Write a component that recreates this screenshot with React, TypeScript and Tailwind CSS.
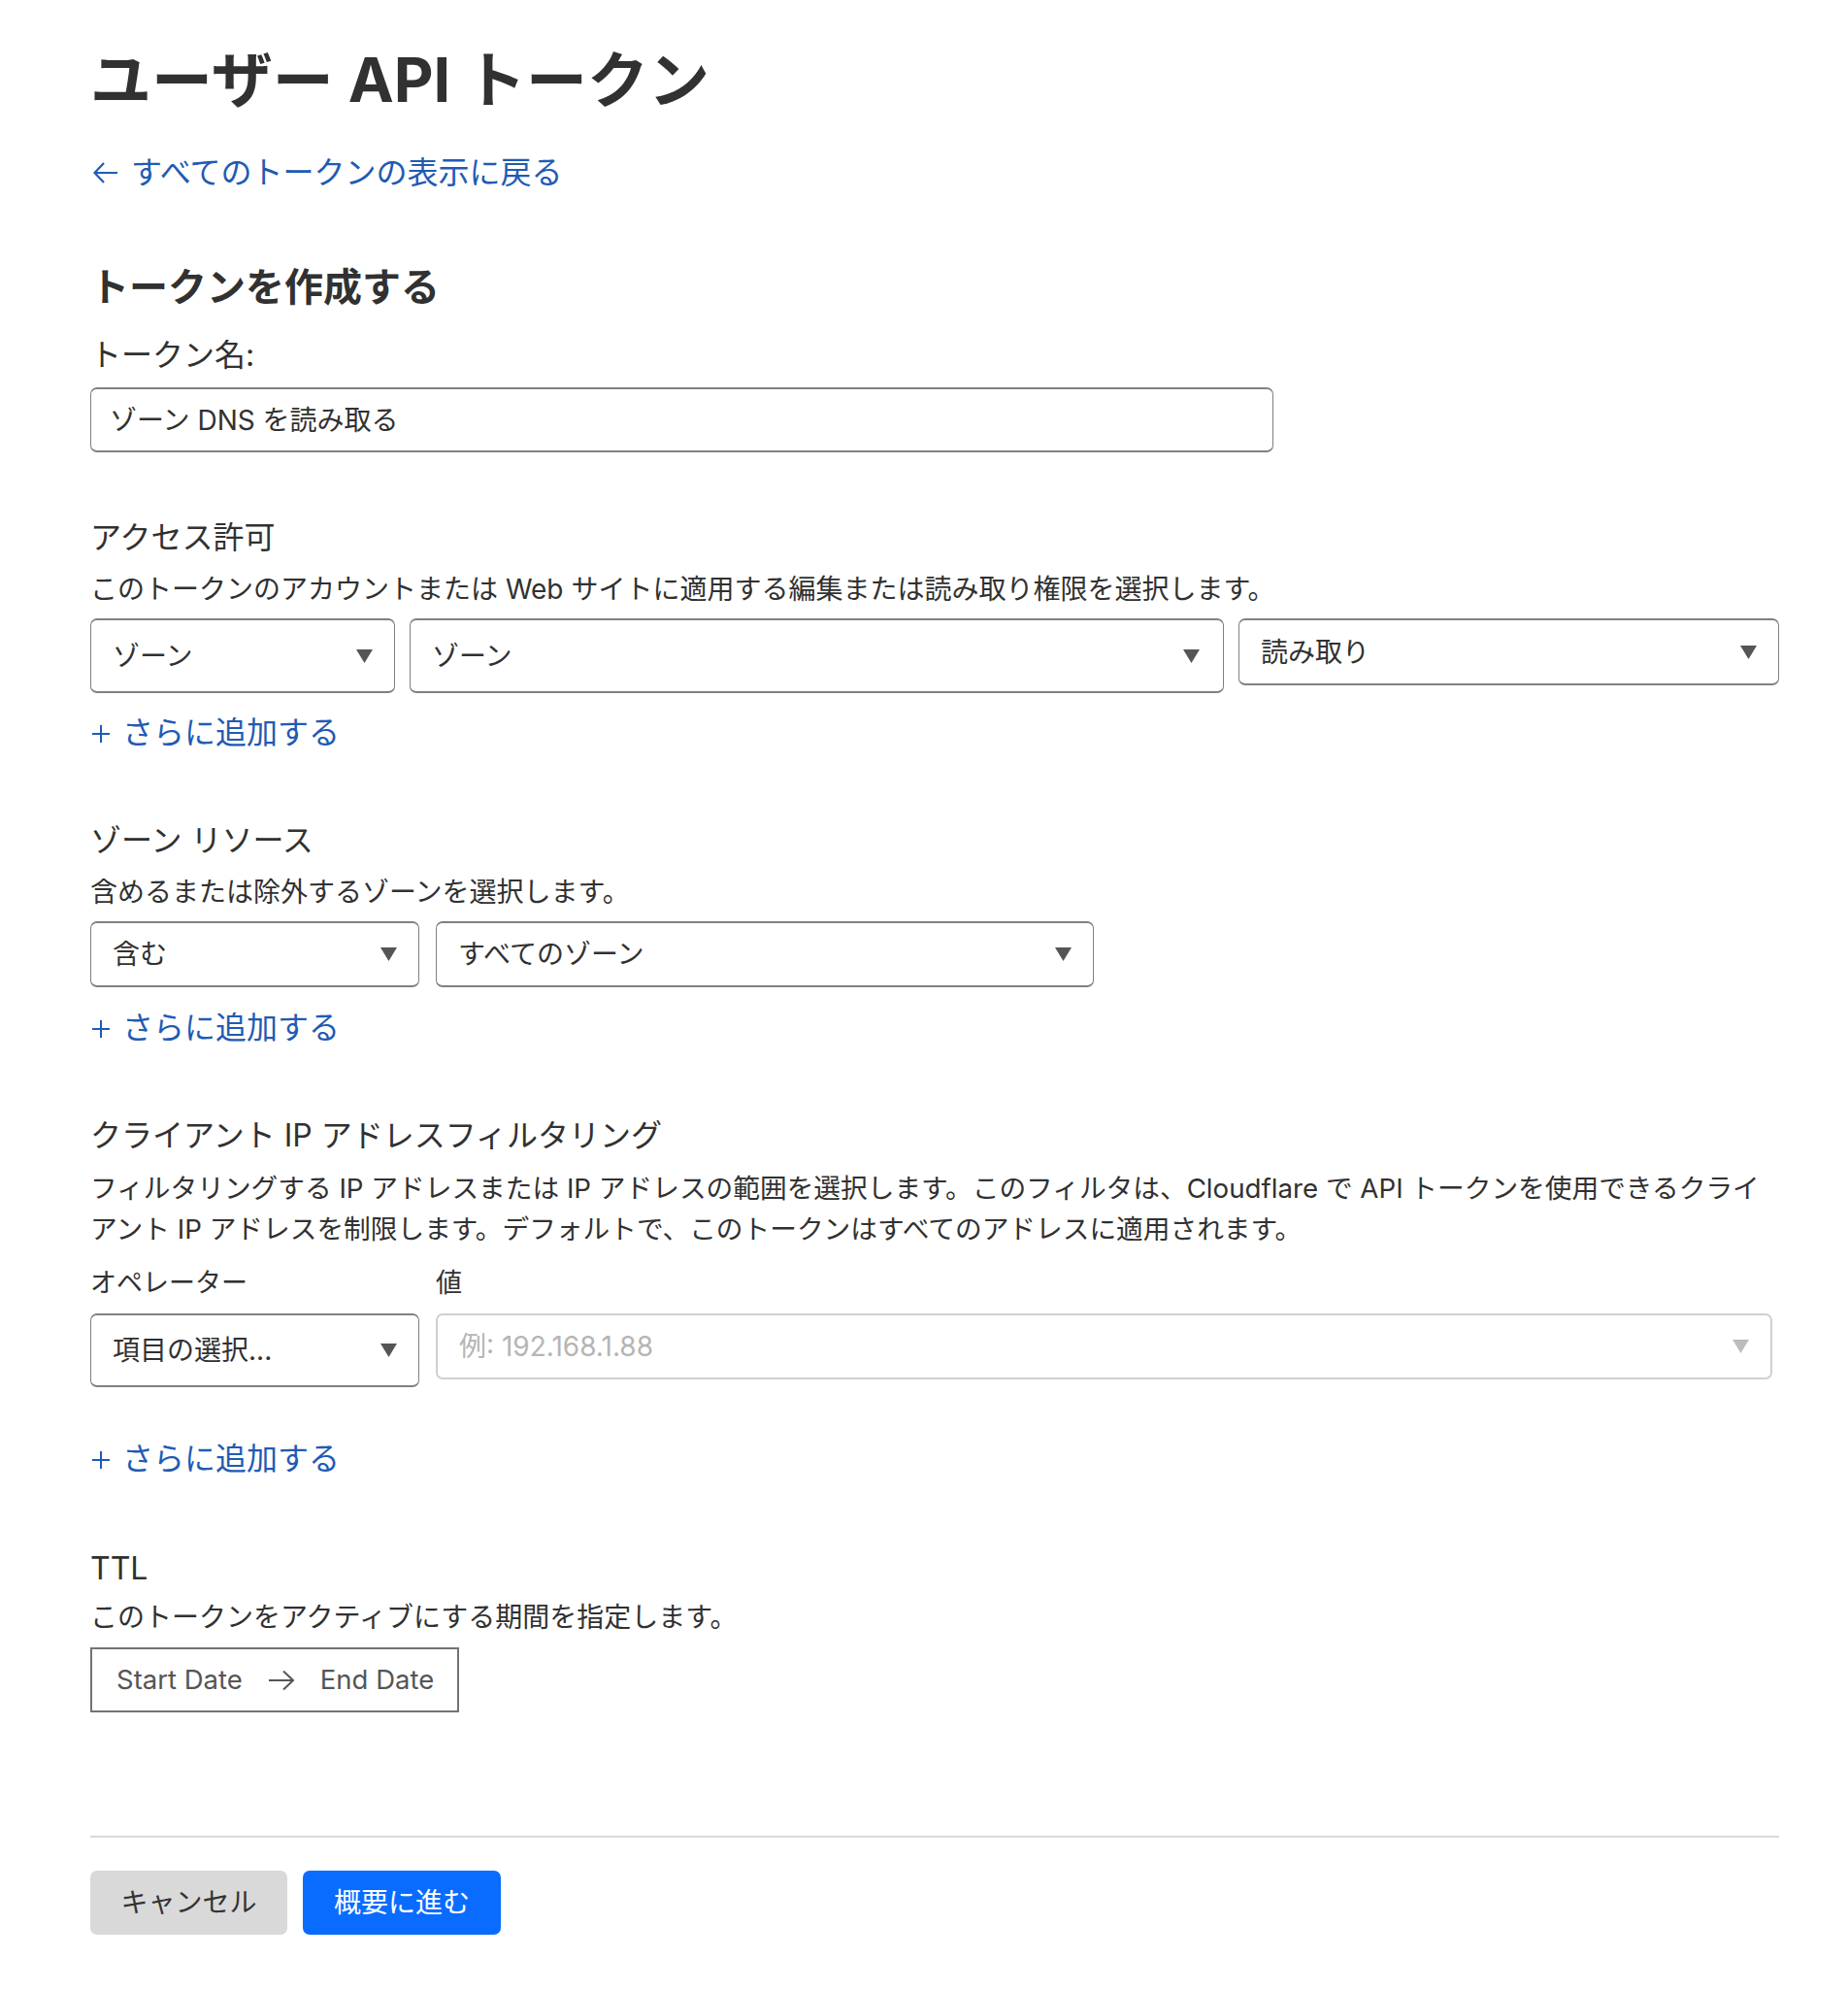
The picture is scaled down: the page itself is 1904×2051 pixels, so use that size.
function Caret({ className = "fill-[#555555]" }: { className?: string }) {
  return (
    <svg width="17" height="14" viewBox="0 0 17 14" className={className}>
      <path d="M0 0h17L8.5 14z" />
    </svg>
  )
}

function Select({ label, className, placeholder = false }: { label: string; className: string; placeholder?: boolean }) {
  return (
    <div
      className={`flex items-center justify-between rounded-[7px] bg-white pl-[22px] pr-[22px] ${className}`}
    >
      <span className={placeholder ? "text-[#b5b5b5]" : "text-[#313131]"}>{label}</span>
      <Caret className={placeholder ? "fill-[#bdbdbd]" : "fill-[#555555]"} />
    </div>
  )
}

function AddMore({ className }: { className: string }) {
  return (
    <button type="button" className={`flex items-center gap-[13px] pl-[2px] text-[32px] leading-[40px] text-[#1f5bb4] ${className}`}>
      <svg width="18" height="18" viewBox="0 0 18 18" className="mt-[2px] stroke-[#1f5bb4]" strokeWidth="2">
        <path d="M9 0v18M0 9h18" />
      </svg>
      さらに追加する
    </button>
  )
}

export default function App() {
  return (
    <div className="min-h-[2051px] bg-white pl-[93px] pr-[71px] pt-[42px] text-[#313131] font-['Inter','Noto_Sans_CJK_JP',sans-serif]">
      <h1 className="text-[63px] font-bold leading-[80px]">ユーザー API トークン</h1>

      <a href="#" className="mt-[36px] flex items-center gap-[13px] pl-[3px] text-[32px] leading-[40px] text-[#1f5bb4]">
        <svg width="26" height="24" viewBox="0 0 26 24" fill="none" className="stroke-[#1f5bb4]" strokeWidth="2.2">
          <path d="M25 12H2M11 2 1.5 12 11 22" />
        </svg>
        すべてのトークンの表示に戻る
      </a>

      {/* create token */}
      <h2 className="mt-[73px] text-[40px] font-bold leading-[50px]">トークンを作成する</h2>
      <div className="mt-[25px] text-[32px] leading-[40px]">トークン名:</div>
      <div className="mt-[13px] flex h-[67px] w-[1219px] items-center rounded-[7px] border-x border-y-2 border-[#808080] px-[19px] text-[28px]">
        ゾーン DNS を読み取る
      </div>

      {/* permissions */}
      <div className="mt-[68px] text-[32px] leading-[40px]">アクセス許可</div>
      <p className="mt-[15px] text-[28px] leading-[36px]">
        このトークンのアカウントまたは Web サイトに適用する編集または読み取り権限を選択します。
      </p>
      <div className="mt-[12px] flex items-start gap-[15px] text-[28px]">
        <Select label="ゾーン" className="h-[77px] w-[314px] border-x border-y-2 border-[#808080]" />
        <Select label="ゾーン" className="h-[77px] w-[839px] border-x border-y-2 border-[#808080] pr-[24px]" />
        <Select label="読み取り" className="h-[69px] w-[557px] border-x border-y-2 border-[#808080] pr-[18px]" />
      </div>
      <AddMore className="mt-[21px]" />

      {/* zone resources */}
      <div className="mt-[71px] text-[32px] leading-[40px]">ゾーン リソース</div>
      <p className="mt-[15px] text-[28px] leading-[36px]">含めるまたは除外するゾーンを選択します。</p>
      <div className="mt-[12px] flex items-start gap-[17px] text-[28px]">
        <Select label="含む" className="h-[68px] w-[339px] border-x border-y-2 border-[#808080]" />
        <Select label="すべてのゾーン" className="h-[68px] w-[678px] border-x border-y-2 border-[#808080]" />
      </div>
      <AddMore className="mt-[22px]" />

      {/* client ip filtering */}
      <div className="mt-[71px] text-[32px] leading-[40px]">クライアント IP アドレスフィルタリング</div>
      <p className="mt-[13px] text-[27.7px] leading-[42px]">
        フィルタリングする IP アドレスまたは IP アドレスの範囲を選択します。このフィルタは、Cloudflare で API トークンを使用できるクライ
        <br />
        アント IP アドレスを制限します。デフォルトで、このトークンはすべてのアドレスに適用されます。
      </p>
      <div className="mt-[17px] flex gap-[17px] text-[27px] leading-[36px]">
        <div className="w-[339px]">オペレーター</div>
        <div>値</div>
      </div>
      <div className="mt-[13px] flex items-start gap-[17px] text-[28px]">
        <Select label="項目の選択..." className="h-[76px] w-[339px] border-x border-y-2 border-[#808080]" />
        <Select
          label="例: 192.168.1.88"
          placeholder
          className="h-[68px] w-[1377px] border-2 border-[#d0d0d0] pl-[18px] pr-[20px]"
        />
      </div>
      <AddMore className="mt-[54px]" />

      {/* ttl */}
      <div className="mt-[73px] text-[32px] leading-[40px]">TTL</div>
      <p className="mt-[12px] text-[28px] leading-[36px]">このトークンをアクティブにする期間を指定します。</p>
      <div className="mt-[13px] flex h-[67px] w-[380px] items-center border-2 border-[#737373] pl-[25px] text-[27.5px] text-[#555555]">
        <span>Start Date</span>
        <svg width="28" height="22" viewBox="0 0 28 22" fill="none" className="ml-[26px] mr-[26px] stroke-[#555555]" strokeWidth="2">
          <path d="M1 11h25M16 1.5 26 11 16 20.5" />
        </svg>
        <span>End Date</span>
      </div>

      <div className="mt-[127px] h-[2px] bg-[#d9d9d9]" />

      <div className="mt-[34px] flex gap-[16px] text-[28px]">
        <button type="button" className="h-[66px] w-[203px] rounded-[7px] bg-[#d9d9d9] text-[#333333]">
          キャンセル
        </button>
        <button type="button" className="h-[66px] w-[204px] rounded-[7px] bg-[#0a6cff] text-white">
          概要に進む
        </button>
      </div>
    </div>
  )
}
